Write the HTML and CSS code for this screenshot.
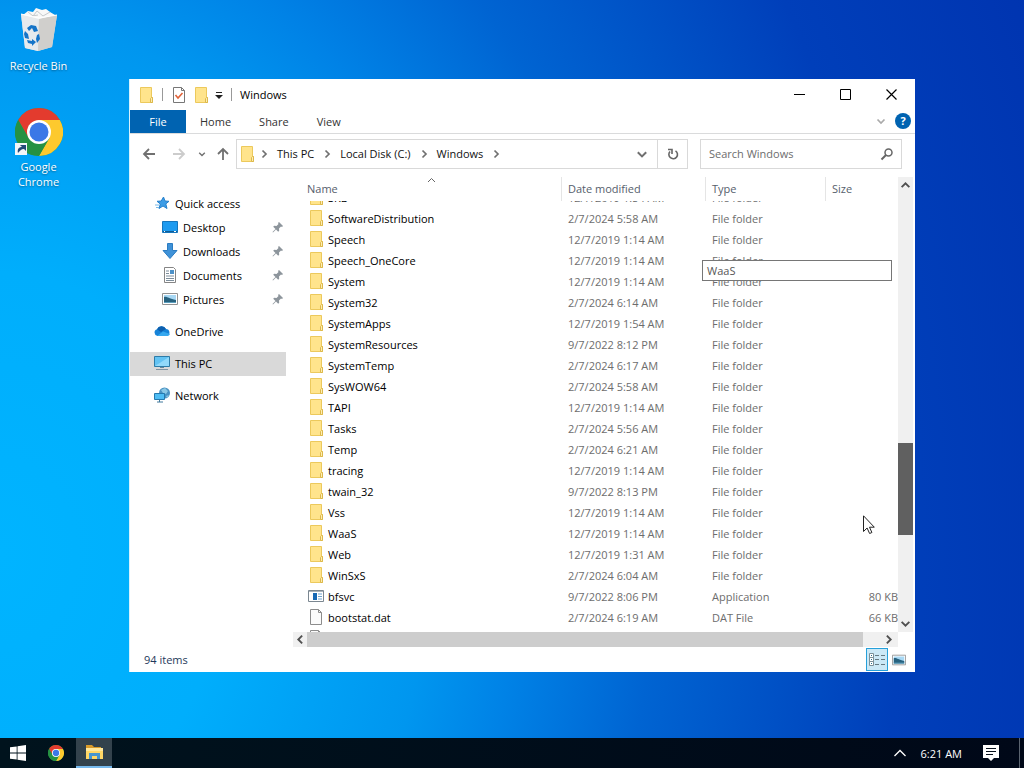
FILE: index.html
```html
<!DOCTYPE html>
<html lang="en">
  <head>
    <meta charset="UTF-8" />
    <meta name="viewport" content="width=device-width, initial-scale=1.0" />
    <title>Windows</title>
    <link rel="stylesheet" href="styles.css">
  </head>
  <body>
    <!-- icon sprites -->
    <svg class="sprites" aria-hidden="true">
      <symbol id="folder" viewBox="0 0 16 16">
        <path d="M2.500.5h11v10h1v5h-12z" fill="#ffe48c" stroke="#ecc95c"/>
        <path d="M12.500 15.500v-4l1-1h1v5z" fill="#ffeeb0" stroke="#dcb84c"/>
      </symbol>
      <symbol id="file" viewBox="0 0 16 16">
        <path d="M2.500.5h8l3 3v12h-11z" fill="#fbfbfb" stroke="#8c8c8c"/>
        <path d="M10.500.5v3h3" fill="none" stroke="#8c8c8c"/>
      </symbol>
      <symbol id="app" viewBox="0 0 16 16">
        <path d="M.5 2.500h15v11H.5z" fill="#fff" stroke="#7b8791"/>
        <path d="M1 3h14v1H1z" fill="#aab3ba"/>
        <path d="M5 5h4v7H5z" fill="#1668b4"/>
        <path d="M10 6h4M10 8.500h4M10 11h4" stroke="#6fa3cf"/>
      </symbol>
      <symbol id="pin" viewBox="0 0 12 12">
        <path d="M7 1l4 4-1 1-1-.5-2 2 .2 2.300-1 1L4 8.500 1 11.500l-.5-.5L3.500 8 1.200 5.800l1-1L4.500 5l2-2L6 2z" fill="#8d959c"/>
      </symbol>
      <symbol id="picture" viewBox="0 0 16 16">
        <path d="M.5 2.500h15v11H.5z" fill="#fff" stroke="#929292"/>
        <path d="M2 4h12v8H2z" fill="#a8d8f4"/>
        <path d="M2 6c3-1 5 2 12 3v3H2z" fill="#27627f"/>
        <path d="M2 11h12v1H2z" fill="#5c9fbe"/>
      </symbol>
      <symbol id="chevron" viewBox="0 0 10 10">
        <path d="M3.500 1.500L7 5 3.500 8.500" fill="none" stroke="currentColor" stroke-width="1.700"/>
      </symbol>
      <symbol id="arrow" viewBox="0 0 14 14">
        <path d="M13 7H2M7 2L2 7l5 5" fill="none" stroke="currentColor" stroke-width="1.800"/>
      </symbol>
      <symbol id="chrome" viewBox="0 0 48 48">
        <circle cx="24" cy="24" r="24" fill="#34a043"/>
        <path d="M24 0A24 24 0 0 1 44.800 12H24L13.600 30 3.200 12A24 24 0 0 1 24 0z" fill="#e33b2e"/>
        <path d="M44.800 12A24 24 0 0 1 24 48L34.400 30 34 17 24 12z" fill="#fdc92e"/>
        <path d="M3.200 12L13.600 30 24 36 34.400 30 24 48A24 24 0 0 1 3.200 12z" fill="#259143"/>
        <circle cx="24" cy="24" r="12" fill="#fff"/>
        <circle cx="24" cy="24" r="9.500" fill="#3b78e7"/>
      </symbol>
    </svg>

    <main class="desktop">
      <div class="shortcuts">
        <a class="shortcut" href="#">
          <svg width="48" height="48" viewBox="0 0 48 48">
            <path d="M6 7l36 1-5 32-14 4-13-3z" fill="#dfe2e4"/>
            <path d="M6 7l18 4-1 33-13-3z" fill="#e6eaed"/>
            <path d="M24 11l18-3-5 32-14 4z" fill="#d0cfcc"/>
            <path d="M8 8l5-4 5 1 3-4 6 2 4-1 4 3 5 3-16 4z" fill="#f8f8f8"/>
            <path d="M13 5l5 4 4-5 6 5 7-4M17 9l6-1" fill="none" stroke="#c5c9cc"/>
            <path d="M6 7l18 4 18-3" fill="none" stroke="#fff"/>
            <path d="M12 21l4-3 5 1 2 5-4 1-2-4-3 3zM10 24l3 3 1 5-4-1-1-4zM12 33l5 1v-2l4 3-4 4v-2l-4-1zM24 27l1 5-3 4-1-4 1-4z" fill="#1474c8"/>
          </svg>
          <span>Recycle Bin</span>
        </a>
        <a class="shortcut" href="#">
          <svg width="48" height="48" viewBox="0 0 48 48">
            <use href="#chrome"/>
            <path d="M0 35h12v12H0z" fill="#f4f6f8"/>
            <path d="M3 45c-1-4 1-6 4-6l-2-2h6v6l-2-2c-3 0-4 2-6 4z" fill="#234a78"/>
          </svg>
          <span>Google Chrome</span>
        </a>
      </div>

      <section class="window">
        <header class="titlebar">
          <svg width="16" height="16"><use href="#folder"/></svg>
          <span class="divider"></span>
          <button class="quick" aria-label="Properties">
            <svg width="16" height="16" viewBox="0 0 16 16">
              <path d="M2.500.5h8l3 3v12h-11z" fill="#fff" stroke="#777"/>
              <path d="M10.500.5v3h3" fill="none" stroke="#777"/>
              <path d="M4.500 8l2.500 3 4.500-5" fill="none" stroke="#e0633a" stroke-width="1.600"/>
            </svg>
          </button>
          <button class="quick" aria-label="New folder"><svg width="16" height="16"><use href="#folder"/></svg></button>
          <button class="quick small" aria-label="Customize toolbar">
            <svg width="8" height="8" viewBox="0 0 8 8"><path d="M1 1.500h6" stroke="#222"/><path d="M0 4h8L4 8z" fill="#222"/></svg>
          </button>
          <span class="divider"></span>
          <h1>Windows</h1>
          <div class="controls">
            <button aria-label="Minimize"><svg width="11" height="11"><path d="M0 5.500h11" stroke="#000"/></svg></button>
            <button aria-label="Maximize"><svg width="11" height="11"><path d="M.5.5h10v10H.5z" fill="none" stroke="#000"/></svg></button>
            <button aria-label="Close"><svg width="11" height="11"><path d="M.5.5l10 10M10.500.5l-10 10" stroke="#000" stroke-width="1.200"/></svg></button>
          </div>
        </header>

        <nav class="tabs">
          <button class="file-tab">File</button>
          <button>Home</button>
          <button>Share</button>
          <button>View</button>
          <div class="tabs-right">
            <svg class="down light" width="10" height="10"><use href="#chevron"/></svg>
            <button class="help" aria-label="Help">?</button>
          </div>
        </nav>

        <div class="toolbar">
          <div class="history">
            <button aria-label="Back"><svg width="14" height="14"><use href="#arrow"/></svg></button>
            <button class="disabled" aria-label="Forward"><svg class="flip" width="14" height="14"><use href="#arrow"/></svg></button>
            <button class="recent" aria-label="Recent locations"><svg class="down" width="8" height="8"><use href="#chevron"/></svg></button>
            <button class="parent" aria-label="Up"><svg class="up" width="14" height="14"><use href="#arrow"/></svg></button>
          </div>
          <div class="address">
            <svg class="place" width="16" height="16"><use href="#folder"/></svg>
            <svg class="sep" width="10" height="10"><use href="#chevron"/></svg>
            <a href="#">This PC</a>
            <svg class="sep" width="10" height="10"><use href="#chevron"/></svg>
            <a href="#">Local Disk (C:)</a>
            <svg class="sep" width="10" height="10"><use href="#chevron"/></svg>
            <a href="#">Windows</a>
            <svg class="sep" width="10" height="10"><use href="#chevron"/></svg>
            <button class="drop" aria-label="Previous locations"><svg class="down" width="12" height="12"><use href="#chevron"/></svg></button>
            <button class="refresh" aria-label="Refresh">
              <svg width="12" height="12" viewBox="0 0 12 12"><path d="M8.500 2.800A4.300 4.300 0 1 1 3 3.500M1 1.500h4V6" fill="none" stroke="#666" stroke-width="1.600"/></svg>
            </button>
          </div>
          <label class="search">
            <input type="text" placeholder="Search Windows" aria-label="Search Windows" />
            <svg width="14" height="14" viewBox="0 0 14 14"><circle cx="8.500" cy="5.500" r="3.500" fill="none" stroke="#666" stroke-width="1.500"/><path d="M6 8l-4.500 4.500" stroke="#666" stroke-width="2"/></svg>
          </label>
        </div>

        <div class="content">
          <nav class="sidebar">
            <a href="#">
              <svg width="16" height="16" viewBox="0 0 16 16"><path d="M9.500 2l1.500 4 4 .3-3.200 2.600L13 13.500 9 11l-4 2.500L6.300 9 3 6.300 7.200 6z" fill="#3c9ce6" stroke="#2580cc"/><path d="M1 10h4M2 12.500h3" stroke="#79b9e8"/></svg>
              Quick access
            </a>
            <a class="sub" href="#">
              <svg width="16" height="16" viewBox="0 0 16 16"><path d="M.5 2.500h15v11H.5z" fill="#1e9bf0" stroke="#1676bd"/><path d="M1 12.500h14" stroke="#105c94"/><path d="M2 12.500h1M12 12.500h2" stroke="#fff"/></svg>
              Desktop
              <svg class="pin" width="12" height="12"><use href="#pin"/></svg>
            </a>
            <a class="sub" href="#">
              <svg width="16" height="16" viewBox="0 0 16 16"><path d="M5.500.5h5v7h4.500L8 15.500 1 7.500h4.500z" fill="#3f92d8" stroke="#2b7cc2"/></svg>
              Downloads
              <svg class="pin" width="12" height="12"><use href="#pin"/></svg>
            </a>
            <a class="sub" href="#">
              <svg width="16" height="16" viewBox="0 0 16 16"><path d="M2.500.5h9l2 2v13h-11z" fill="#fff" stroke="#858585"/><path d="M4 4h3M4 6.500h3M4 9h8M4 11.500h8M4 13.500h8" stroke="#7c8d9b"/><path d="M8 3h4v4H8z" fill="#4c91c8"/></svg>
              Documents
              <svg class="pin" width="12" height="12"><use href="#pin"/></svg>
            </a>
            <a class="sub" href="#">
              <svg width="16" height="16"><use href="#picture"/></svg>
              Pictures
              <svg class="pin" width="12" height="12"><use href="#pin"/></svg>
            </a>
            <a class="group" href="#">
              <svg width="16" height="16" viewBox="0 0 16 16"><path d="M3.500 13a3.500 3.500 0 0 1-.5-6.800A5 5 0 0 1 12 6a3.600 3.600 0 0 1 1 7z" fill="#1683d8"/><path d="M3 6.200A5 5 0 0 1 12 6L7 9z" fill="#0d5fae"/><path d="M3 13l6-4.500 7 2.500a3 3 0 0 1-3 2z" fill="#36a8ef"/></svg>
              OneDrive
            </a>
            <a class="group selected" href="#">
              <svg width="16" height="16" viewBox="0 0 16 16"><path d="M.5 1.500h15v10H.5z" fill="#63c3f3" stroke="#2d7ca8"/><path d="M1 11l14-9v9z" fill="#91d9fa"/><path d="M6 12h4v1H6z" fill="#68879a"/><path d="M2 14.500h12" stroke="#8094a2"/></svg>
              This PC
            </a>
            <a class="group" href="#">
              <svg width="16" height="16" viewBox="0 0 16 16"><circle cx="10.500" cy="6" r="5.500" fill="#4a92c2"/><path d="M7 3l4-2 3 3-2 3-3-1zM12 9l3-1-2 3z" fill="#8ac7e5"/><path d="M.5 6.500h10v6H.5z" fill="#4ebdf4" stroke="#2579ae"/><path d="M3 15h6M5.500 13v2" stroke="#40799c"/></svg>
              Network
            </a>
          </nav>

          <div class="listing">
            <div class="view">
              <table>
                <colgroup><col><col class="col-date"><col class="col-type"><col class="col-size"></colgroup>
                <thead>
                  <tr>
                    <th><svg class="sort" width="9" height="6" viewBox="0 0 9 6"><path d="M1 5l3.500-3.500L8 5" fill="none" stroke="#666"/></svg>Name</th>
                    <th>Date modified</th>
                    <th>Type</th>
                    <th>Size</th>
                  </tr>
                </thead>
                <tbody>
                  <tr class="cut">
                    <td><div><span><svg width="16" height="16"><use href="#folder"/></svg>SKB</span></div></td>
                    <td><div><span>12/7/2019 1:54 AM</span></div></td>
                    <td><div><span>File folder</span></div></td>
                    <td></td>
                  </tr>
                  <tr><td><svg width="16" height="16"><use href="#folder"/></svg>SoftwareDistribution</td><td>2/7/2024 5:58 AM</td><td>File folder</td><td></td></tr>
                  <tr><td><svg width="16" height="16"><use href="#folder"/></svg>Speech</td><td>12/7/2019 1:14 AM</td><td>File folder</td><td></td></tr>
                  <tr><td><svg width="16" height="16"><use href="#folder"/></svg>Speech_OneCore</td><td>12/7/2019 1:14 AM</td><td>File folder</td><td></td></tr>
                  <tr><td><svg width="16" height="16"><use href="#folder"/></svg>System</td><td>12/7/2019 1:14 AM</td><td>File folder</td><td></td></tr>
                  <tr><td><svg width="16" height="16"><use href="#folder"/></svg>System32</td><td>2/7/2024 6:14 AM</td><td>File folder</td><td></td></tr>
                  <tr><td><svg width="16" height="16"><use href="#folder"/></svg>SystemApps</td><td>12/7/2019 1:54 AM</td><td>File folder</td><td></td></tr>
                  <tr><td><svg width="16" height="16"><use href="#folder"/></svg>SystemResources</td><td>9/7/2022 8:12 PM</td><td>File folder</td><td></td></tr>
                  <tr><td><svg width="16" height="16"><use href="#folder"/></svg>SystemTemp</td><td>2/7/2024 6:17 AM</td><td>File folder</td><td></td></tr>
                  <tr><td><svg width="16" height="16"><use href="#folder"/></svg>SysWOW64</td><td>2/7/2024 5:58 AM</td><td>File folder</td><td></td></tr>
                  <tr><td><svg width="16" height="16"><use href="#folder"/></svg>TAPI</td><td>12/7/2019 1:14 AM</td><td>File folder</td><td></td></tr>
                  <tr><td><svg width="16" height="16"><use href="#folder"/></svg>Tasks</td><td>2/7/2024 5:56 AM</td><td>File folder</td><td></td></tr>
                  <tr><td><svg width="16" height="16"><use href="#folder"/></svg>Temp</td><td>2/7/2024 6:21 AM</td><td>File folder</td><td></td></tr>
                  <tr><td><svg width="16" height="16"><use href="#folder"/></svg>tracing</td><td>12/7/2019 1:14 AM</td><td>File folder</td><td></td></tr>
                  <tr><td><svg width="16" height="16"><use href="#folder"/></svg>twain_32</td><td>9/7/2022 8:13 PM</td><td>File folder</td><td></td></tr>
                  <tr><td><svg width="16" height="16"><use href="#folder"/></svg>Vss</td><td>12/7/2019 1:14 AM</td><td>File folder</td><td></td></tr>
                  <tr><td><svg width="16" height="16"><use href="#folder"/></svg>WaaS</td><td>12/7/2019 1:14 AM</td><td>File folder</td><td></td></tr>
                  <tr><td><svg width="16" height="16"><use href="#folder"/></svg>Web</td><td>12/7/2019 1:31 AM</td><td>File folder</td><td></td></tr>
                  <tr><td><svg width="16" height="16"><use href="#folder"/></svg>WinSxS</td><td>2/7/2024 6:04 AM</td><td>File folder</td><td></td></tr>
                  <tr><td><svg width="16" height="16"><use href="#app"/></svg>bfsvc</td><td>9/7/2022 8:06 PM</td><td>Application</td><td>80 KB</td></tr>
                  <tr><td><svg width="16" height="16"><use href="#file"/></svg>bootstat.dat</td><td>2/7/2024 6:19 AM</td><td>DAT File</td><td>66 KB</td></tr>
                  <tr><td><svg width="16" height="16"><use href="#file"/></svg></td><td></td><td></td><td></td></tr>
                </tbody>
              </table>
              <div class="vscroll">
                <button aria-label="Scroll up"><svg class="up-chev" width="11" height="11"><use href="#chevron"/></svg></button>
                <div class="before"></div>
                <div class="thumb"></div>
                <div class="after"></div>
                <button aria-label="Scroll down"><svg class="down" width="11" height="11"><use href="#chevron"/></svg></button>
              </div>
            </div>
            <div class="hscroll">
              <button aria-label="Scroll left"><svg class="flip" width="11" height="11"><use href="#chevron"/></svg></button>
              <div class="thumb"></div>
              <button aria-label="Scroll right"><svg width="11" height="11"><use href="#chevron"/></svg></button>
            </div>
            <div class="tooltip">WaaS</div>
          </div>
        </div>

        <footer class="status">
          <span>94 items</span>
          <div class="views">
            <button class="active" aria-label="Details view">
              <svg width="16" height="16" viewBox="0 0 16 16"><path d="M.5 1.500h4v4h-4zM.5 5.500h4v4h-4zM.5 9.500h4v4h-4z" fill="#fff" stroke="#7b9099"/><path d="M2 3.500h1M2 7.500h1M2 11.500h1" stroke="#26718f"/><path d="M6 3.500h4M12 3.500h4M6 7.500h4M12 7.500h4M6 12.500h4M12 12.500h4" stroke="#657982"/></svg>
            </button>
            <button aria-label="Large icons view"><svg width="14" height="14"><use href="#picture"/></svg></button>
          </div>
        </footer>
      </section>

      <svg class="cursor" width="12" height="19" viewBox="0 0 12 19"><path d="M.5.8v15.700l3.600-3.500 2.500 5.500 2.300-1-2.400-5.300h4.800z" fill="#fff" stroke="#222"/></svg>
    </main>

    <footer class="taskbar">
      <button aria-label="Start">
        <svg width="16" height="16" viewBox="0 0 16 16"><path d="M0 2.300L6.700 1.400v6.200H0zM7.500 1.300L16 0v7.600H7.500zM0 8.400h6.700v6.200L0 13.700zM7.500 8.400H16V16l-8.500-1.300z" fill="#fff"/></svg>
      </button>
      <button aria-label="Google Chrome"><svg width="16" height="16"><use href="#chrome"/></svg></button>
      <button class="running" aria-label="File Explorer">
        <svg width="18" height="16" viewBox="0 0 18 16"><path d="M1 1h6l2 2h7v3H1z" fill="#d99b2a"/><path d="M1 4h17v11H1z" fill="#ffd766"/><path d="M1 4h17v3H1z" fill="#ffe79b"/><path d="M4 15V9h11v6h-3v-3H7v3z" fill="#4695cf"/></svg>
      </button>
      <div class="tray">
        <button aria-label="Show hidden icons"><svg width="12" height="8" viewBox="0 0 12 8"><path d="M.5 7L6 1.500 11.500 7" fill="none" stroke="#fff" stroke-width="1.300"/></svg></button>
        <time>6:21 AM</time>
        <button aria-label="Notifications"><svg width="16" height="16" viewBox="0 0 16 16"><path d="M0 0h16v13h-5l-3 3-3-3H0z" fill="#fff"/><path d="M3 3.500h10M3 6.500h10M3 9.500h7" stroke="#06101c"/></svg></button>
        <span class="show-desktop"></span>
      </div>
    </footer>
  </body>
</html>
```
FILE: styles.css
```css
* {
  box-sizing: border-box;
}

body {
  margin: 0;
  height: 100vh;
  display: flex;
  flex-direction: column;
  overflow: hidden;
  font-family: "Open Sans", "Noto Sans", sans-serif;
  font-size: 11px;
  line-height: 15px;
  color: #000;
}

button {
  display: flex;
  align-items: center;
  justify-content: center;
  padding: 0;
  border: none;
  background: none;
  font: inherit;
  color: inherit;
}

a {
  color: inherit;
  text-decoration: none;
}

svg {
  flex: none;
}

.sprites {
  position: absolute;
  width: 0;
  height: 0;
}

.down,
.up {
  transform: rotate(90deg);
}

.flip {
  transform: rotate(180deg);
}

.up-chev {
  transform: rotate(-90deg);
}

/* desktop */
.desktop {
  flex: 1;
  position: relative;
  background: radial-gradient(110% 190% at 0% 75%, #00b4ff 0%, #00aefc 20%, #0096ef 38%, #0082e6 46%, #0064d2 58%, #003fba 80%, #0034b0 100%);
}

.shortcuts {
  display: flex;
  flex-direction: column;
  gap: 35px;
  width: 77px;
  padding-top: 7px;
}

.shortcut {
  display: flex;
  flex-direction: column;
  align-items: center;
  gap: 3px;
  padding: 0 8px;
  text-align: center;
  color: #fff;
  text-shadow: 0 1px 2px rgba(0, 0, 0, 0.4);
}

.shortcut span {
  margin: 0 -8px;
}

.shortcut:last-child span {
  margin: 0;
}

/* window */
.window {
  position: absolute;
  left: 129px;
  right: 109px;
  top: 79px;
  bottom: 66px;
  display: flex;
  flex-direction: column;
  background: #fff;
  border-left: 1px solid #d5f2ff;
}

.titlebar {
  display: flex;
  align-items: center;
  height: 31px;
  padding-left: 8px;
}

.divider {
  width: 1px;
  height: 13px;
  margin: 0 8px;
  background: #999;
}

.quick {
  margin-right: 6px;
}

.quick.small {
  margin-right: 0;
}

h1 {
  margin: 0;
  font-size: 11px;
  font-weight: normal;
}

.controls {
  display: flex;
  align-self: stretch;
  margin: 0 1px 0 auto;
}

.controls button {
  width: 46px;
}

.tabs {
  display: flex;
  height: 24px;
  border-bottom: 1px solid #dadbdc;
  color: #333;
}

.tabs > button {
  padding: 0 14px;
}

.tabs .file-tab {
  width: 56px;
  background: #0063b1;
  color: #fff;
}

.tabs-right {
  display: flex;
  align-items: center;
  gap: 9px;
  margin-left: auto;
  padding: 0 4px 2px 0;
}

.light {
  color: #aaa;
}

.help {
  width: 16px;
  height: 16px;
  border-radius: 50%;
  background: #0063b1;
  color: #fff;
  font-weight: bold;
}

.toolbar {
  display: flex;
  padding: 5px 13px 8px 4px;
  color: #707070;
}

.history {
  display: flex;
  width: 102px;
}

.history button {
  width: 30px;
}

.history .recent {
  width: 16px;
}

.history .parent {
  width: 26px;
}

.history .disabled {
  color: #ccc;
}

.address,
.search {
  display: flex;
  align-items: center;
  height: 30px;
  border: 1px solid #d9d9d9;
}

.address {
  flex: 1;
  padding-left: 2px;
}

.address a,
.search input {
  padding: 0 0 2px;
}

.address a {
  color: #111;
}

.place {
  margin-right: -4px;
}

.sep {
  margin: 0 8px;
}

.drop {
  width: 30px;
  margin-left: auto;
}

.refresh {
  width: 30px;
  height: 28px;
  border-left: 1px solid #d9d9d9;
}

.search {
  width: 202px;
  margin-left: 12px;
  padding: 0 7px 0 8px;
}

.search input {
  flex: 1;
  min-width: 0;
  border: none;
  outline: none;
  font: inherit;
}

.search input::placeholder {
  color: #6d6d6d;
}

/* folder tree */
.content {
  flex: 1;
  display: flex;
  min-height: 0;
}

.sidebar {
  width: 156px;
  padding-top: 15px;
}

.sidebar a {
  display: flex;
  align-items: center;
  gap: 5px;
  height: 24px;
  padding: 0 2px 2px 24px;
}

.sidebar .sub {
  padding-left: 32px;
}

.pin {
  margin-left: auto;
}

.sidebar .group {
  margin-top: 8px;
}

.sidebar .selected {
  background: #d9d9d9;
}

/* file list */
.listing {
  position: relative;
  flex: 1;
  display: flex;
  flex-direction: column;
  min-width: 0;
  margin: 0 2px 0 7px;
}

.view {
  flex: 1;
  display: flex;
  min-height: 0;
  overflow: hidden;
}

table {
  flex: 1;
  align-self: flex-start;
  table-layout: fixed;
  border-spacing: 0;
  color: #6d6d6d;
}

.col-date {
  width: 144px;
}

.col-type {
  width: 120px;
}

.col-size {
  width: 72px;
}

th {
  height: 24px;
  padding: 0 6px 2px;
  border-right: 1px solid #e5e5e5;
  font-weight: normal;
  text-align: left;
  color: #56606c;
}

th:first-child {
  position: relative;
  padding-left: 14px;
}

th:last-child {
  border-right: none;
}

.sort {
  position: absolute;
  left: 50%;
  top: 0;
}

td {
  height: 21px;
  padding: 0 6px;
  line-height: 21px;
  white-space: nowrap;
}

td:first-child {
  padding-left: 15px;
  color: #000;
}

td:last-child {
  padding: 0;
  text-align: right;
}

td svg {
  margin: 2px 4px 0 0;
  vertical-align: top;
}

/* row scrolled half under the header */
.cut td {
  height: 7px;
}

.cut div {
  display: flex;
  align-items: flex-end;
  height: 7px;
  overflow: hidden;
}

.cut span {
  height: 21px;
}

.vscroll {
  display: flex;
  flex-direction: column;
  width: 15px;
  background: #f0f0f0;
  color: #505050;
}

.vscroll button {
  height: 17px;
}

.before {
  flex: 248;
}

.vscroll .thumb {
  flex: 92;
  background: #606060;
}

.after {
  flex: 80;
}

.hscroll {
  display: flex;
  height: 15px;
  margin-right: 15px;
  background: #f0f0f0;
  color: #505050;
}

.hscroll button {
  width: 14px;
}

.hscroll .thumb {
  flex: 1;
  margin-right: 16px;
  background: #cdcdcd;
}

.hscroll button:last-child {
  width: 19px;
}

.tooltip {
  position: absolute;
  top: 83px;
  right: 21px;
  width: 190px;
  padding: 2px 4px;
  border: 1px solid #767676;
  background: #fff;
  color: #575757;
}

.status {
  display: flex;
  align-items: center;
  justify-content: space-between;
  height: 25px;
  padding: 0 9px 0 14px;
  color: #1e395b;
}

.views {
  display: flex;
  align-items: center;
  gap: 4px;
}

.views .active {
  width: 22px;
  height: 23px;
  border: 1px solid #26a0da;
  background: #cbe8f6;
}

.cursor {
  position: absolute;
  left: 863px;
  top: 515px;
}

/* taskbar */
.taskbar {
  display: flex;
  height: 30px;
  background: linear-gradient(90deg, #00131d, #000818);
  color: #fff;
}

.taskbar > button {
  width: 36px;
  margin-right: 2px;
}

.taskbar .running {
  background: #33424c;
  border-bottom: 2px solid #76b9ed;
}

.tray {
  display: flex;
  align-items: center;
  gap: 15px;
  margin-left: auto;
  padding-right: 4px;
}

.tray time {
  margin-right: 6px;
}

.show-desktop {
  width: 1px;
  height: 30px;
  margin-left: 5px;
  background: #5b6470;
}
```
